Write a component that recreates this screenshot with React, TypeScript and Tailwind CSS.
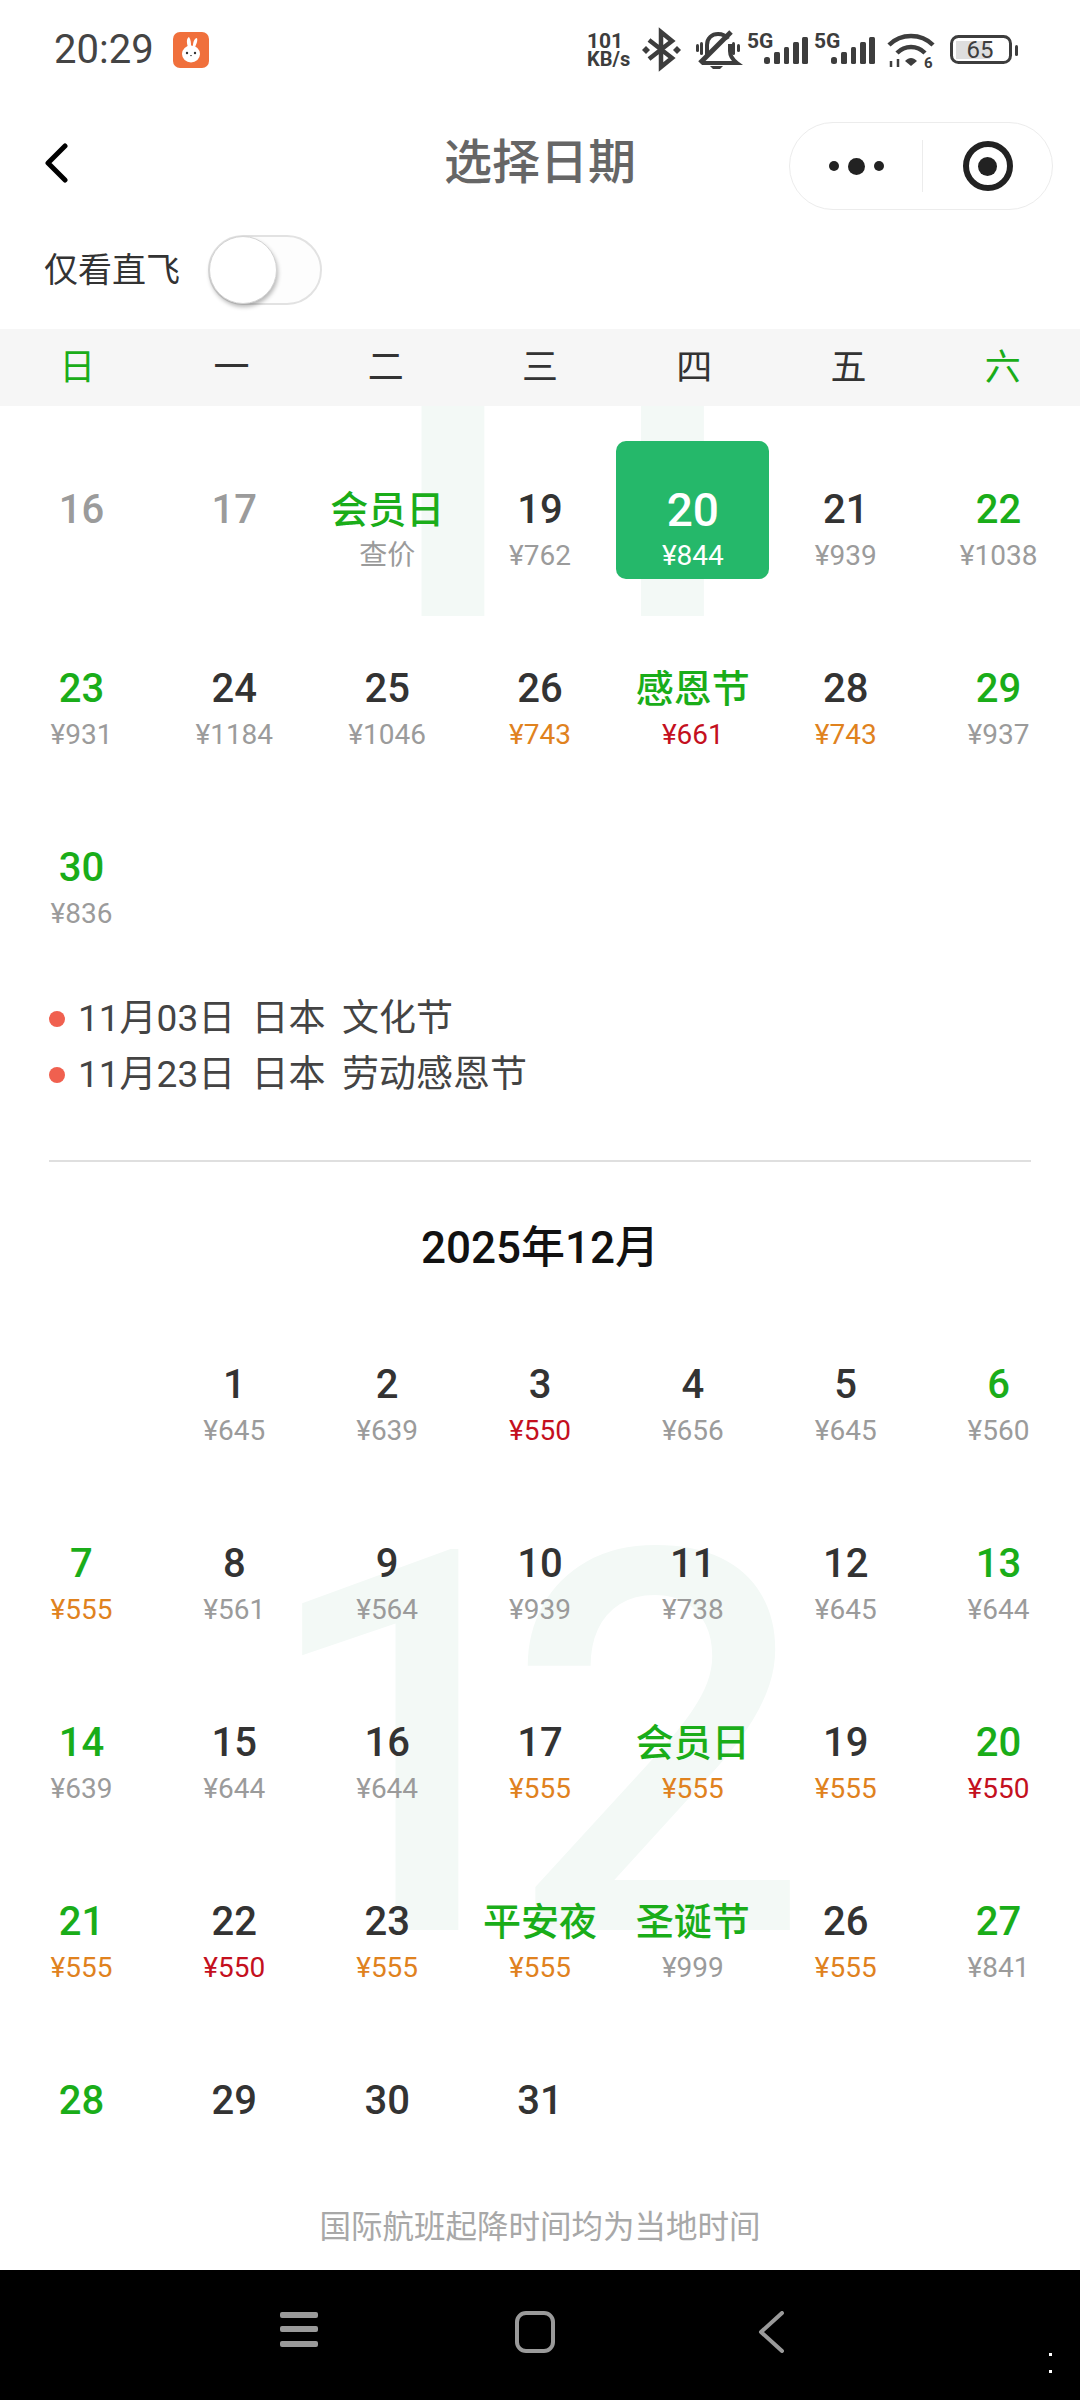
import React from 'react';

type Day = {
  d?: number;
  label?: string;
  price?: string;
  tone?: 'p' | 'o' | 'r';
  kind?: 'past' | 'weekend' | 'holiday' | 'selected';
};

const priceColor = { p: 'text-[#9b9b9b]', o: 'text-[#e0821e]', r: 'text-[#c4101e]' };

const november: Day[] = [
  { d: 16, kind: 'past' },
  { d: 17, kind: 'past' },
  { label: '会员日', price: '查价', kind: 'holiday' },
  { d: 19, price: '¥762' },
  { d: 20, price: '¥844', kind: 'selected' },
  { d: 21, price: '¥939' },
  { d: 22, price: '¥1038', kind: 'weekend' },
  { d: 23, price: '¥931', kind: 'weekend' },
  { d: 24, price: '¥1184' },
  { d: 25, price: '¥1046' },
  { d: 26, price: '¥743', tone: 'o' },
  { label: '感恩节', price: '¥661', tone: 'r', kind: 'holiday' },
  { d: 28, price: '¥743', tone: 'o' },
  { d: 29, price: '¥937', kind: 'weekend' },
  { d: 30, price: '¥836', kind: 'weekend' },
];

const december: Day[] = [
  {},
  { d: 1, price: '¥645' },
  { d: 2, price: '¥639' },
  { d: 3, price: '¥550', tone: 'r' },
  { d: 4, price: '¥656' },
  { d: 5, price: '¥645' },
  { d: 6, price: '¥560', kind: 'weekend' },
  { d: 7, price: '¥555', tone: 'o', kind: 'weekend' },
  { d: 8, price: '¥561' },
  { d: 9, price: '¥564' },
  { d: 10, price: '¥939' },
  { d: 11, price: '¥738' },
  { d: 12, price: '¥645' },
  { d: 13, price: '¥644', kind: 'weekend' },
  { d: 14, price: '¥639', kind: 'weekend' },
  { d: 15, price: '¥644' },
  { d: 16, price: '¥644' },
  { d: 17, price: '¥555', tone: 'o' },
  { label: '会员日', price: '¥555', tone: 'o', kind: 'holiday' },
  { d: 19, price: '¥555', tone: 'o' },
  { d: 20, price: '¥550', tone: 'r', kind: 'weekend' },
  { d: 21, price: '¥555', tone: 'o', kind: 'weekend' },
  { d: 22, price: '¥550', tone: 'r' },
  { d: 23, price: '¥555', tone: 'o' },
  { label: '平安夜', price: '¥555', tone: 'o', kind: 'holiday' },
  { label: '圣诞节', price: '¥999', kind: 'holiday' },
  { d: 26, price: '¥555', tone: 'o' },
  { d: 27, price: '¥841', kind: 'weekend' },
  { d: 28, kind: 'weekend' },
  { d: 29 },
  { d: 30 },
  { d: 31 },
];

const weekdays = ['日', '一', '二', '三', '四', '五', '六'];

const Cell = ({ day }: { day: Day }) => {
  if (day.kind === 'selected') {
    return (
      <div className="flex h-[138px] flex-col items-center rounded-[10px] bg-[#25b86a] pt-[45px] text-white">
        <div className="text-[46px] leading-[48px] font-medium">{day.d}</div>
        <div className="text-[28px] leading-[44px]">{day.price}</div>
      </div>
    );
  }
  let top = 'text-[#333333]';
  if (day.kind === 'past') top = 'text-[#9b9b9b]';
  if (day.kind === 'weekend' || day.kind === 'holiday') top = 'text-[#1aad19]';
  return (
    <div className="flex h-[138px] flex-col items-center pt-[45px]">
      {day.label ? (
        <div className={`text-[38px] leading-[48px] font-medium whitespace-nowrap ${top}`}>{day.label}</div>
      ) : (
        <div className={`text-[40px] leading-[48px] font-medium ${top}`}>{day.d}</div>
      )}
      {day.price && <div className={`text-[28px] leading-[43px] ${priceColor[day.tone ?? 'p']}`}>{day.price}</div>}
    </div>
  );
};

const Signal = ({ x }: { x: number }) => (
  <g transform={`translate(${x} 0)`}>
    <text x="0" y="23" fontSize="21" fontWeight="700" fontFamily="Roboto">5G</text>
    <rect x="17" y="32" width="6" height="7" rx="2.5" />
    <rect x="27" y="27" width="6" height="12" rx="1.5" />
    <rect x="37" y="22" width="5" height="17" rx="1.5" />
    <rect x="46" y="17" width="6" height="22" rx="1.5" />
    <rect x="55" y="12" width="6" height="27" rx="1.5" />
  </g>
);

const StatusIcons = () => (
  <svg width="442" height="50" viewBox="0 0 442 50" className="text-[#3d3d3d]" fill="currentColor">
    <text x="9" y="23" fontSize="21" fontWeight="700" fontFamily="Roboto">101</text>
    <text x="9" y="41" fontSize="20" fontWeight="700" fontFamily="Roboto">KB/s</text>
    {/* bluetooth */}
    <path d="M71 15 L94 33 L83 42 V7 L94 16 L71 34" fill="none" stroke="currentColor" strokeWidth="4.5" />
    <path d="M64 25 l4-4 4 4-4 4z M95 25 l4-4 4 4-4 4z" />
    {/* muted bell */}
    <path d="M129 30 V20 C129 13 134 9 140 9 C144 9 148 11 150 14 M152 19 V26 C152 32 155 35 159 38 H124" fill="none" stroke="currentColor" strokeWidth="4" />
    <path d="M122 38 L153 7" stroke="currentColor" strokeWidth="5" />
    <path d="M132 41 h13 l-3 3 h-7z" />
    <rect x="118" y="19" width="3" height="8" rx="1.5" />
    <rect x="122" y="17" width="3" height="13" rx="1.5" />
    <rect x="154" y="17" width="3" height="13" rx="1.5" />
    <rect x="159" y="19" width="3" height="8" rx="1.5" />
    <Signal x={169} />
    <Signal x={236} />
    {/* wifi */}
    <path d="M311 20 C323 8 343 8 355 20 M319 28 C327 20 339 20 347 28" fill="none" stroke="currentColor" strokeWidth="4.5" />
    <path d="M327 36 C331 32 335 32 339 36 L333 41 Z" />
    <path d="M313 36 v6 M320 34 v8" stroke="currentColor" strokeWidth="2.5" />
    <text x="346" y="43" fontSize="15" fontWeight="700" fontFamily="Roboto">6</text>
    {/* battery */}
    <rect x="373.5" y="11.5" width="59" height="26" rx="7" fill="none" stroke="currentColor" strokeWidth="3" />
    <rect x="378" y="16" width="34" height="18" fill="#dedede" />
    <text x="402" y="33" textAnchor="middle" fontSize="24" fontFamily="Roboto">65</text>
    <rect x="437" y="20" width="3" height="11" rx="1.5" />
  </svg>
);

const BunnyBadge = () => (
  <svg width="36" height="36" viewBox="0 0 36 36">
    <rect width="36" height="36" rx="7" fill="#f0703c" />
    <ellipse cx="18" cy="22" rx="9" ry="8.5" fill="#fff" />
    <path d="M15 15 C13 9 14 6 16 5 C18 8 18 11 18 14 Z M20 14 C20 9 22 6 24 6 C25 9 23 13 22 15 Z" fill="#fff" />
    <circle cx="14" cy="21" r="1.2" fill="#333" />
    <circle cx="22" cy="21" r="1.2" fill="#333" />
    <path d="M17 23 h2 l-1 1.5z" fill="#333" />
  </svg>
);

export default function App() {
  return (
    <div className="flex h-[2400px] w-[1080px] flex-col overflow-hidden bg-white font-['Roboto','Noto_Sans_CJK_SC',sans-serif]">
      {/* status bar */}
      <div className="flex h-[100px] items-center justify-between pl-[54px] pr-[60px]">
        <div className="flex items-center gap-[19px]">
          <span className="text-[40px] leading-none text-[#444444]">20:29</span>
          <BunnyBadge />
        </div>
        <StatusIcons />
      </div>

      {/* nav header */}
      <div className="relative z-10 flex h-[126px] items-center justify-between bg-white pl-[44px] pr-[27px]">
        <svg width="24" height="40" viewBox="0 0 24 40" fill="none" stroke="#000" strokeWidth="5" strokeLinecap="round" strokeLinejoin="round">
          <path d="M21 3 L4 20 L21 37" />
        </svg>
        <div className="absolute left-0 right-0 text-center text-[48px] leading-none font-medium text-[#666666]">选择日期</div>
        <div className="relative mt-[6px] flex h-[88px] w-[264px] items-center rounded-full border border-[#ececec]">
          <div className="flex w-[132px] items-center justify-center gap-[9px]">
            <span className="size-[10px] rounded-full bg-[#222222]" />
            <span className="size-[17px] rounded-full bg-[#222222]" />
            <span className="size-[10px] rounded-full bg-[#222222]" />
          </div>
          <div className="h-[52px] w-px bg-[#ececec]" />
          <div className="flex flex-1 items-center justify-center">
            <div className="flex size-[50px] items-center justify-center rounded-full border-[6px] border-[#222222]">
              <span className="size-[19px] rounded-full bg-[#222222]" />
            </div>
          </div>
        </div>
      </div>

      {/* direct flights toggle */}
      <div className="relative z-10 flex h-[103px] items-start gap-[28px] bg-white pl-[44px] pt-[9px]">
        <span className="text-[34px] leading-[70px] text-[#333333]">仅看直飞</span>
        <div className="relative h-[70px] w-[114px] rounded-full border-2 border-[#e2e2e2] bg-[#fdfdfd]">
          <div className="absolute left-[-1px] top-[-1px] size-[68px] rounded-full border border-[#d4d4d4] bg-white shadow-[1px_3px_4px_rgba(0,0,0,0.28)]" />
        </div>
      </div>

      {/* weekday header */}
      <div className="relative z-10 grid h-[77px] shrink-0 grid-cols-7 items-center bg-[#f6f6f6] text-center text-[36px]">
        {weekdays.map((w, i) => (
          <span key={w} className={i === 0 || i === 6 ? 'text-[#1aad19]' : 'text-[#333333]'}>
            {w}
          </span>
        ))}
      </div>

      <div className="flex flex-1 flex-col">
        {/* November */}
        <div className="relative grid grid-cols-7 gap-y-[41px] px-[5px] pt-[35px]">
          <div className="absolute left-[284px] top-[-292px] text-[534px] leading-[640px] font-medium tracking-[-84px] text-[#f3f9f6] select-none">11</div>
          {november.map((day, i) => (
            <div key={i} className="relative">
              <Cell day={day} />
            </div>
          ))}
        </div>

        <div className="mt-[54px] pl-[49px] text-[37px] leading-[56px] text-[#444444] [word-spacing:-1px]">
          <div className="flex items-center gap-[13px]">
            <span className="size-[16px] rounded-full bg-[#f0604f]" />
            <span className="whitespace-pre">11月03日  日本  文化节</span>
          </div>
          <div className="flex items-center gap-[13px]">
            <span className="size-[16px] rounded-full bg-[#f0604f]" />
            <span className="whitespace-pre">11月23日  日本  劳动感恩节</span>
          </div>
        </div>

        <div className="mx-[49px] mt-[57px] h-[2px] bg-[#dfdfdf]" />

        <div className="mt-[56px] text-center text-[44px] leading-[60px] font-medium text-[#111111]">2025年12月</div>

        {/* December */}
        <div className="relative mt-[38px] grid grid-cols-7 gap-y-[41px] px-[5px]">
          <div className="absolute left-[258px] top-[112px] text-[534px] leading-[640px] font-medium tracking-[-55px] text-[#f3f9f6] select-none">12</div>
          {december.map((day, i) => (
            <div key={i} className="relative">
              <Cell day={day} />
            </div>
          ))}
        </div>

        <div className="mt-[36px] text-center text-[31.5px] leading-[44px] text-[#a8a8a8]">国际航班起降时间均为当地时间</div>
      </div>

      {/* system nav */}
      <div className="relative flex h-[130px] shrink-0 items-start bg-black pt-[41px] pl-[280px]">
        <svg width="38" height="36" viewBox="0 0 38 36" fill="#9a9a9a">
          <rect y="1" width="38" height="6" rx="2" />
          <rect y="15" width="38" height="6" rx="2" />
          <rect y="30" width="38" height="6" rx="2" />
        </svg>
        <svg width="40" height="42" viewBox="0 0 40 42" fill="none" stroke="#9a9a9a" strokeWidth="4" className="ml-[197px]">
          <rect x="2" y="2" width="36" height="38" rx="9" />
        </svg>
        <svg width="28" height="42" viewBox="0 0 28 42" fill="none" stroke="#9a9a9a" strokeWidth="4" strokeLinecap="round" strokeLinejoin="round" className="ml-[202px]">
          <path d="M25 2 L4 21 L25 40" />
        </svg>
        <span className="absolute left-[1049px] top-[83px] size-[3px] bg-white" />
        <span className="absolute left-[1049px] top-[100px] size-[3px] bg-white" />
      </div>
    </div>
  );
}
